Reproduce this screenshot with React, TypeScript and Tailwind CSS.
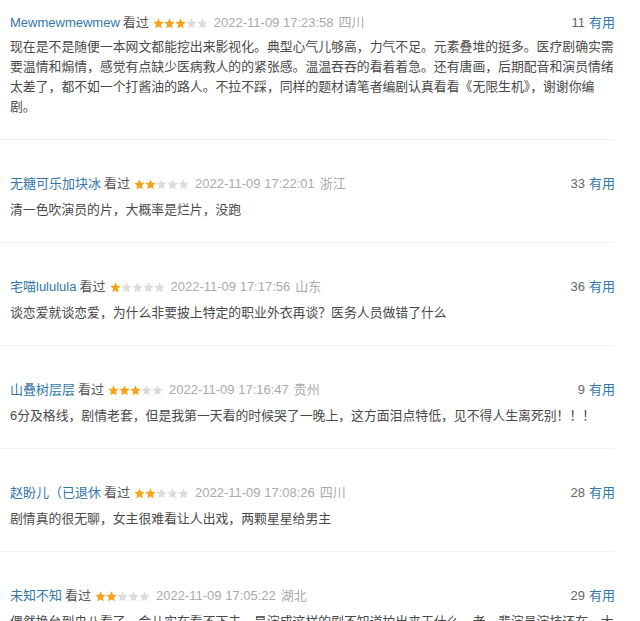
const comments = [
  {
    name: "Mewmewmewmew",
    stars: 3,
    time: "2022-11-09 17:23:58",
    loc: "四川",
    votes: 11,
    lines: [
      "现在是不是随便一本网文都能挖出来影视化。典型心气儿够高，力气不足。元素叠堆的挺多。医疗剧确实需",
      "要温情和煽情，感觉有点缺少医病救人的的紧张感。温温吞吞的看着着急。还有唐画，后期配音和演员情绪",
      "太差了，都不如一个打酱油的路人。不拉不踩，同样的题材请笔者编剧认真看看《无限生机》，谢谢你编",
      "剧。",
    ],
  },
  {
    name: "无糖可乐加块冰",
    stars: 2,
    time: "2022-11-09 17:22:01",
    loc: "浙江",
    votes: 33,
    lines: ["清一色吹演员的片，大概率是烂片，没跑"],
  },
  {
    name: "宅喵lulululа",
    stars: 1,
    time: "2022-11-09 17:17:56",
    loc: "山东",
    votes: 36,
    lines: ["谈恋爱就谈恋爱，为什么非要披上特定的职业外衣再谈？医务人员做错了什么"],
  },
  {
    name: "山叠树层层",
    stars: 3,
    time: "2022-11-09 17:16:47",
    loc: "贵州",
    votes: 9,
    lines: ["6分及格线，剧情老套，但是我第一天看的时候哭了一晚上，这方面泪点特低，见不得人生离死别！！！"],
  },
  {
    name: "赵盼儿（已退休",
    stars: 2,
    time: "2022-11-09 17:08:26",
    loc: "四川",
    votes: 28,
    lines: ["剧情真的很无聊，女主很难看让人出戏，两颗星星给男主"],
  },
  {
    name: "未知不知",
    stars: 2,
    time: "2022-11-09 17:05:22",
    loc: "湖北",
    votes: 29,
    lines: ["偶然换台到央八看了一会儿实在看不下去，是演成这样的剧不知道拍出来干什么，老一辈演员演技还在，大"],
  },
];

const Star = ({ on }: { on: boolean }) => (
  <svg width="11" height="11" viewBox="0 0 24 24">
    <polygon
      points="12,0.5 15.3,8 23.5,8.8 17.3,14.3 19.1,22.5 12,18.3 4.9,22.5 6.7,14.3 0.5,8.8 8.7,8"
      fill={on ? "#f7a21b" : "#dcdcdc"}
    />
  </svg>
);

export default function App() {
  return (
    <div className="w-[640px] h-[621px] overflow-hidden bg-white font-['Liberation_Sans','Noto_Sans_CJK_SC',sans-serif]">
      <div className="w-[615px]">
        {comments.map((c, i) => (
          <div
            key={i}
            className={`border-b border-[#f3f3f3] pb-[22px] pl-[10px] ${i === 0 ? "pt-[13px]" : "pt-[34px]"}`}
          >
            <div className="flex items-center justify-between h-[20px] text-[13px] leading-[20px]">
              <div className="flex items-center whitespace-nowrap">
                <span className="text-[#3377aa]">{c.name}</span>
                <span className="ml-[3px] text-[#555]">看过</span>
                <span className="ml-[4px] flex">
                  {[0, 1, 2, 3, 4].map((s) => (
                    <Star key={s} on={s < c.stars} />
                  ))}
                </span>
                <span className="ml-[6px] text-[#aaa]">{c.time}</span>
                <span className="ml-[5px] text-[#aaa]">{c.loc}</span>
              </div>
              <div className="whitespace-nowrap">
                <span className="text-[#666]">{c.votes}</span>
                <span className="ml-[4px] text-[#3377aa]">有用</span>
              </div>
            </div>
            <div
              className={`text-[12.85px] leading-[20px] text-[#494949] whitespace-nowrap ${i === 0 ? "mt-[4px]" : "mt-[6px]"}`}
            >
              {c.lines.map((l, j) => (
                <div key={j}>{l}</div>
              ))}
            </div>
          </div>
        ))}
      </div>
    </div>
  );
}
